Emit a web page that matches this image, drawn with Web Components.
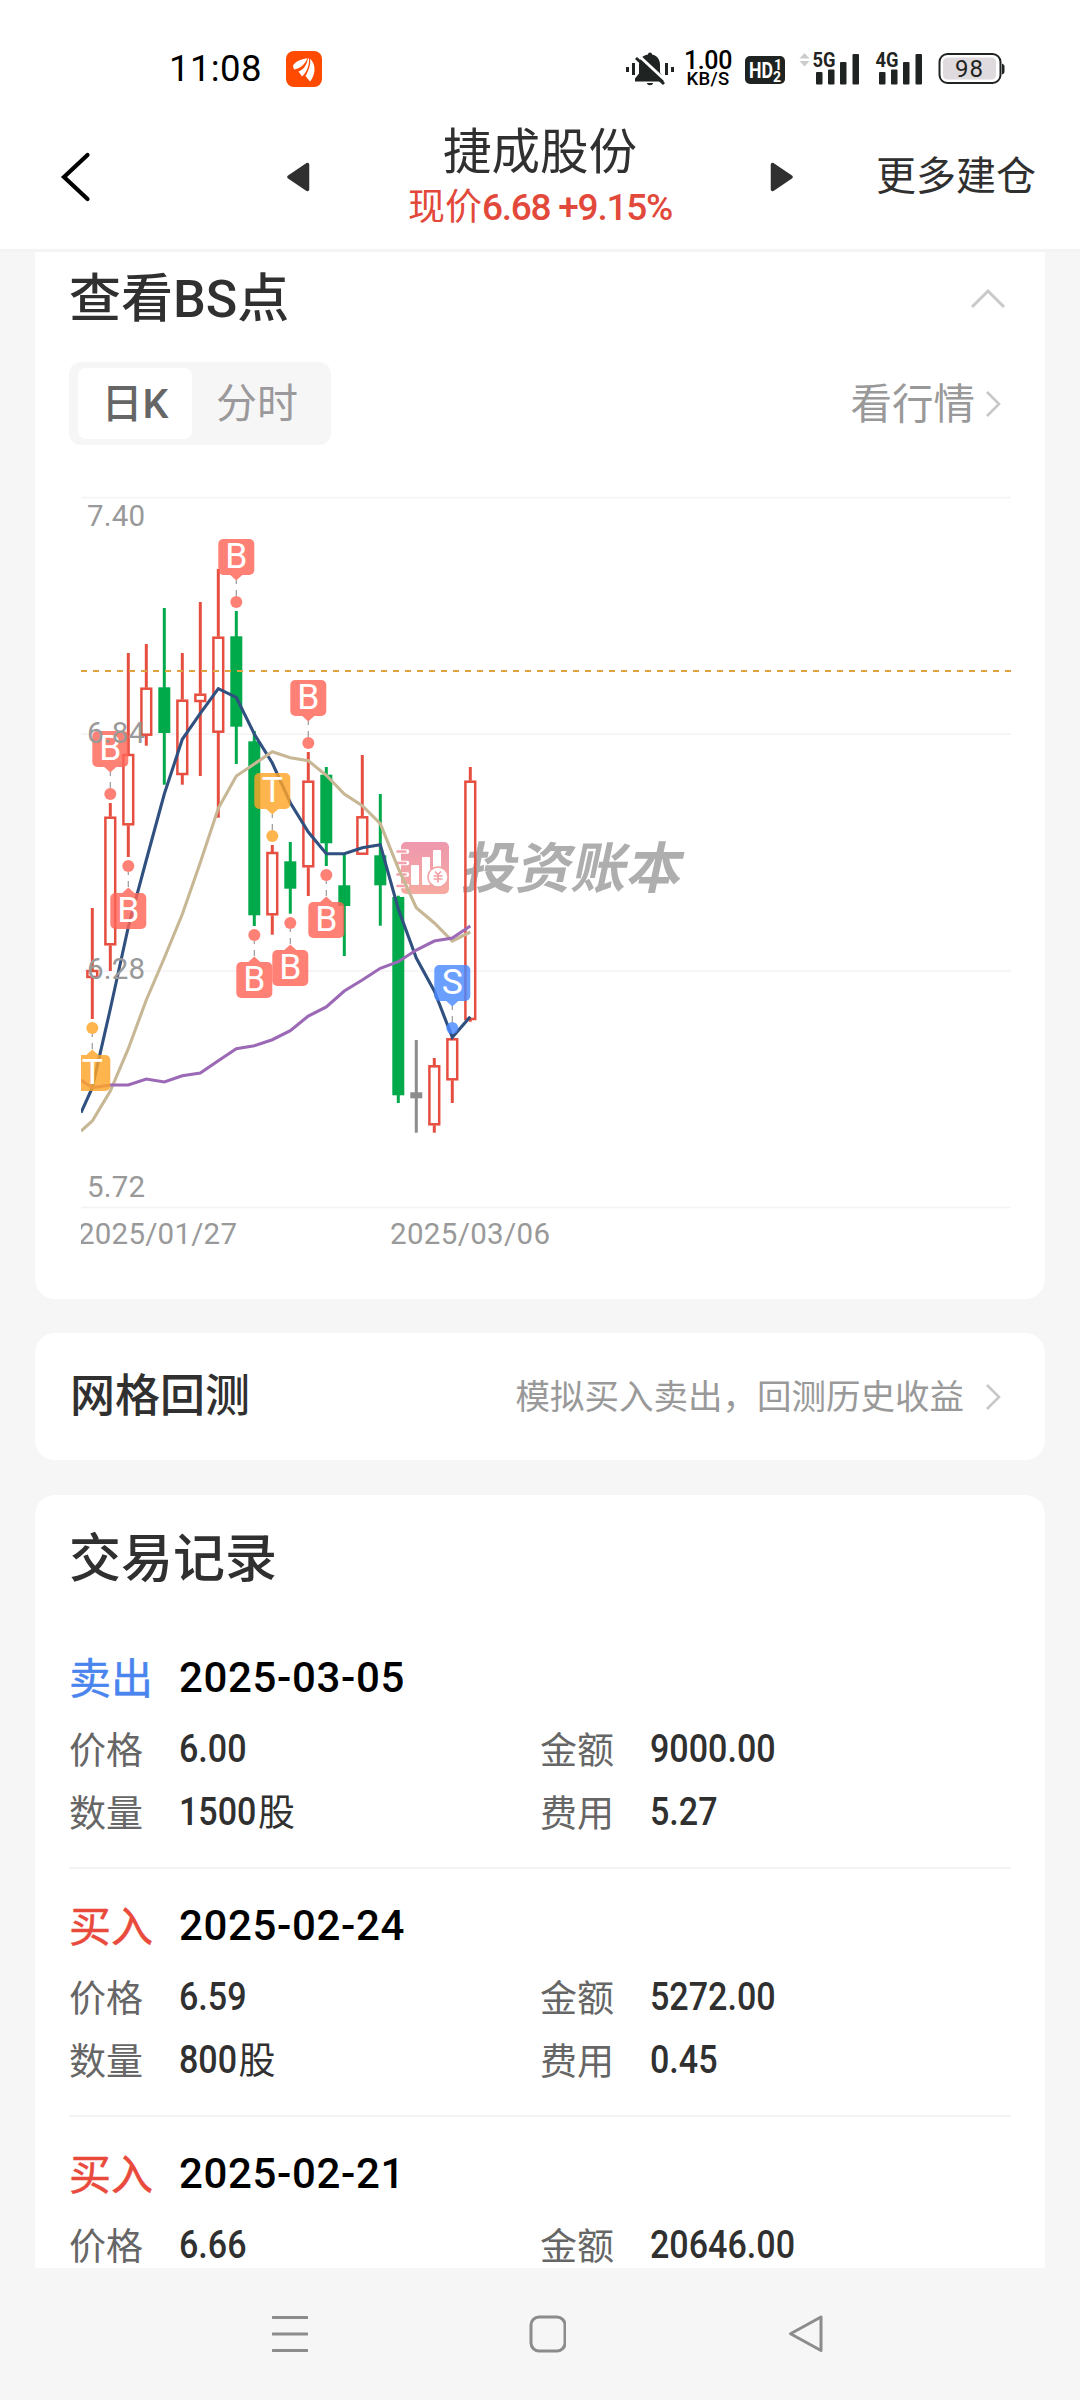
<!DOCTYPE html>
<html lang="zh-CN">
<head>
<meta charset="utf-8">
<title>捷成股份</title>
<style>
html,body{margin:0;padding:0}
body{width:1080px;height:2400px;overflow:hidden;background:#f6f6f7;font-family:Roboto,"Noto Sans CJK SC",sans-serif;color:#303030}
</style>
</head>
<body>
<stock-app></stock-app>
<script>
const define = (name, html, setup) => customElements.define(name, class extends HTMLElement {
  connectedCallback() {
    if (this.shadowRoot) return;
    const root = this.attachShadow({ mode: 'open' });
    root.innerHTML = typeof html === 'function' ? html(this) : html;
    if (setup) setup(this, root);
  }
});

/* Text spread over a given width by letter spacing. */
define('fit-text', `<style>:host{display:inline-block;white-space:pre}span{display:inline-block}</style><span><slot></slot></span>`,
  (host, root) => {
    const span = root.querySelector('span');
    const want = +host.getAttribute('w');
    const n = [...host.textContent].length;
    span.style.letterSpacing = ((want - span.getBoundingClientRect().width) / n) + 'px';
    host.style.width = want + 'px';
  });

define('status-bar', `<style>
:host{display:flex;padding:34px 74px 0 169px;align-items:center;justify-content:space-between;height:70px;color:#000}
.l,.r{display:flex;align-items:center}
.l{gap:24px;font-size:36.500px;line-height:36px}
.l svg,.r svg{display:block;overflow:visible}
.speed{display:flex;flex-direction:column;align-items:center;font-weight:500;width:48px;margin:0 12px 0 9px}
.speed .a{font-size:25px;line-height:20px;font-weight:500}
.speed .b{font-size:18.500px;line-height:17px}
</style>
<div class="l"><fit-text w="93">11:08</fit-text>
<svg width="36" height="36" viewBox="0 0 36 36"><rect width="36" height="36" rx="8" fill="#ff4a00"/><path fill="#fff" d="M20 7.500C13 8.500 8 12 7 15L8 18.500C14 18 19 13 21.500 7.500ZM22 7.500C21 14 17 19 12.500 20.500L16 25.500C21 21 23.500 14 23 7.500ZM24 7.500C25 13 23 19 19.500 25L24 30.500C29 25 31 14 24 7.500Z"/></svg></div>
<div class="r">
<svg width="49" height="36" viewBox="627 51 49 36" fill="#1f2321"><rect x="627" y="67" width="3" height="5"/><rect x="633" y="63" width="3" height="12"/><rect x="666" y="63" width="3" height="12"/><rect x="672" y="67" width="3" height="5"/><path d="M651 52.500c1.500 0 2 1 2 2 5 1 8 5 8 10v8l4 6v3h-29v-3l4-5v-8c0-6 3-10 9-11 0-1 .5-2 2-2zM648 83h6c0 3-6 3-6 0z"/><path d="M638.500 54.500l28 26" stroke="#fff" stroke-width="3"/><path d="M637 58l28 26" stroke="#1f2321" stroke-width="3"/></svg>
<div class="speed"><span class="a"><fit-text w="48">1.00</fit-text></span><span class="b"><fit-text w="43">KB/S</fit-text></span></div>
<svg width="262" height="36" viewBox="744 51 262 36" fill="#1f2321" font-family="Roboto,sans-serif">
<rect x="745" y="56" width="40" height="28" rx="5"/>
<text x="749" y="78" font-size="22" font-weight="700" fill="#fff" textLength="24" lengthAdjust="spacingAndGlyphs">HD</text>
<text x="774" y="69.500" font-size="14" font-weight="700" fill="#fff">1</text><text x="773" y="81.500" font-size="14" font-weight="700" fill="#fff">2</text>
<path d="M804.500 53l5 5.500h-10zM804.500 66.500l5-5.500h-10z" fill="#ccc"/>
<text x="812.500" y="67" font-size="21" font-weight="700" textLength="23" lengthAdjust="spacingAndGlyphs">5G</text>
<text x="875.500" y="67" font-size="21" font-weight="700" textLength="23" lengthAdjust="spacingAndGlyphs">4G</text>
<g id="b"><rect x="816" y="72" width="6.500" height="12.500" rx="1"/><rect x="828" y="69.500" width="6.500" height="15" rx="1"/><rect x="840" y="62" width="6.500" height="22.500" rx="1"/><rect x="852.500" y="54" width="6.500" height="30.500" rx="1"/></g>
<use href="#b" x="63"/>
<rect x="939.500" y="54" width="61" height="29" rx="8" fill="none" stroke="#1f2321" stroke-width="2"/>
<rect x="943" y="57.500" width="53" height="22" rx="4.500" fill="#dedade"/><path d="M1002 63.500q2.500 1 2.500 2.500v6q0 1.500-2.500 2.500z"/>
<text x="955" y="77" font-size="24" textLength="28">98</text>
</svg></div>`);

define('nav-header', `<style>
:host{display:grid;grid-template-columns:230px 130px 360px 130px 230px;height:145px;align-items:center;border-bottom:3px solid #f5f3f5;background:#fff}
.t{text-align:center;align-self:start}
.n{font-size:48.500px;line-height:56px;margin-top:21px;color:#303030}
.p{font-size:37px;line-height:46px;margin-top:4px;color:#e2493b;white-space:pre;display:flex;justify-content:center}
.p fit-text{font-weight:500;font-size:37px}
.more{font-size:40px;white-space:nowrap;padding-left:26px;line-height:52px;padding-top:1px}
svg{display:block}
</style>
<svg width="60" height="56" viewBox="40 149 60 56" style="margin-left:40px"><path d="M87.500 155L64 177L87.500 199" fill="none" stroke="#000" stroke-width="4.200" stroke-linecap="round"/></svg>
<svg width="24" height="30" viewBox="0 0 24 30" style="margin-left:57px"><path d="M20.500 2.500v25L2 15z" fill="#303030" stroke="#303030" stroke-width="3.500" stroke-linejoin="round"/></svg>
<div class="t"><div class="n">捷成股份</div><div class="p">现价<fit-text w="190">6.68 +9.15%</fit-text></div></div>
<svg width="24" height="30" viewBox="0 0 24 30" style="margin-left:49px"><path d="M3.500 2.500v25L22 15z" fill="#303030" stroke="#303030" stroke-width="3.500" stroke-linejoin="round"/></svg>
<div class="more">更多建仓</div>`);

define('panel-card', `<style>:host{display:block;background:#fff;border-radius:20px;padding:0 34px;box-sizing:border-box;overflow:hidden}</style><slot></slot>`);

define('chevron-icon', h => {
  const up = h.hasAttribute('up');
  return `<style>:host{display:block}svg{display:block}</style>` + (up
    ? `<svg width="36" height="22" viewBox="0 0 36 22"><path d="M2 20L18 4L34 20" fill="none" stroke="#c8c8ca" stroke-width="3"/></svg>`
    : `<svg width="16" height="28" viewBox="0 0 16 28"><path d="M2 2L14 14L2 26" fill="none" stroke="#c8c8ca" stroke-width="2.600"/></svg>`);
});

define('segmented-tabs', `<style>
:host{display:flex;box-sizing:border-box;width:262px;height:83px;padding:6px 9px;background:#f6f6f7;border-radius:12px;font-size:41px}
span{display:flex;align-items:center;justify-content:center;box-sizing:border-box;padding-bottom:8px}
.on{width:114px;background:#fff;border-radius:8px;color:#666;font-weight:500}
.off{flex:1;color:#9b999b}
</style><span class="on">日K</span><span class="off">分时</span>`);

const X0 = 92.3, STEP = 18;
const candles = [
 ['r',908,970,978,1019],['r',803,816.7,945.3,971],['r',653,754,825.3,857],['r',644,687.7,735.7,745.7],
 ['g',608,687.3,733,784.7],['r',653,699.7,775,784.7],['r',602,693.7,702,776],['r',569,636.7,732.7,817.7],
 ['g',611,636.3,726.7,764],['g',731,741.3,915.3,926],['r',845,852,915.3,934.7],['g',842,861.3,888.7,913.7],
 ['r',752,780.7,867.3,896],['g',767,774.7,843.3,866],['g',854,885.3,906,956],['r',755,816.3,854.7,854.7],
 ['g',794,855.3,885.3,925.7],['g',895.7,897,1095.3,1103],['n',1040,1092.3,1098.3,1132.7],
 ['r',1058,1065.3,1125.3,1132.7],['r',1038,1038.3,1080.3,1103],['r',767,780.7,1020,1021.7]];
const averages = [
 ['#30507f',1112.7,[1087.7,1009,927,860,794,739.3,713.3,688.7,697.3,734,763,802.7,832,853.7,853.7,847.7,844.7,909,958,991,1037.3,1016.7]],
 ['#c7b795',1131,[1121,1091,1048.7,1000,958,914.3,862.5,808.3,776,764,751.7,757.7,760.7,775.3,794,805.7,823.7,868.3,907.7,923,941,932]],
 ['#9b69b5',1080,[1087.7,1085,1085,1079,1082,1075.7,1073,1060.7,1048.7,1045.7,1039.7,1030.7,1016,1007,991,980,968.3,961.7,950,941,938,926]]];
const markers = [['B',1,794,1],['B',8,602,1],['T',10,836,1],['B',12,743,1],['S',20,1028,1],
 ['T',0,1028,0],['B',2,866,0],['B',9,935,0],['B',11,923,0],['B',13,875,0]];
const tint = { B:'#ff6659', T:'#ffa528', S:'#4a8aff' };

function candleSvg([c,h,t,b,l], i) {
  const x = X0 + STEP * i, col = { r:'#e64e40', g:'#00aa4b', n:'#8c8c8e' }[c];
  const wick = (a, z) => z > a ? `<path d="M${x} ${a}V${z}" stroke="${col}" stroke-width="3"/>` : '';
  if (c !== 'r') return wick(h, l) + `<rect x="${x-6}" y="${t}" width="12" height="${b-t}" fill="${col}"/>`;
  return wick(h, t) + wick(b, l) + `<rect x="${x-4.9}" y="${t+1}" width="9.800" height="${b-t-2}" fill="none" stroke="${col}" stroke-width="2.500"/>`;
}
function markerSvg([k, i, y, above]) {
  const x = X0 + STEP * i, top = above ? y - 63 : y + 27;
  const tip = above ? `M${x-6} ${top+36}L${x} ${top+41.5}L${x+6} ${top+36}z` : `M${x-6} ${top}L${x} ${top-5.5}L${x+6} ${top}z`;
  const d = above ? `M${x} ${y-22}v4M${x} ${y-12}v6` : `M${x} ${y+6}v3M${x} ${y+15}v6`;
  return `<path d="${d}" stroke="#999" stroke-width="1.200"/><g fill="${tint[k]}" opacity=".82"><rect x="${x-18}" y="${top}" width="36" height="36" rx="5"/><path d="${tip}"/><circle cx="${x}" cy="${y}" r="6"/></g>
  <text x="${x}" y="${top+29}" font-size="35.500" fill="#fff" text-anchor="middle">${k}</text>`;
}
define('k-chart', () => {
  const grid = [497.5,734.2,970.9,1207.5].map(y => `<path d="M81 ${y}H1011" stroke="#f4f2f4" stroke-width="1.500"/>`).join('');
  const lines = averages.map(([c,s,p]) => `<polyline fill="none" stroke="${c}" stroke-width="3.100" points="81,${s} ${p.map((y,i)=>(X0+STEP*i)+','+y).join(' ')}"/>`).join('');
  const label = (t,x,y,w) => `<text x="${x}" y="${y}" textLength="${w}">${t}</text>`;
  return `<style>:host{display:block}svg{display:block}</style>
<svg width="930" height="780" viewBox="81 480 930 780" font-family="Roboto,'Noto Sans CJK SC',sans-serif">
<defs><linearGradient id="wm" x1="0" y1="0" x2="0" y2="1"><stop offset="0" stop-color="#ee98ae"/><stop offset="1" stop-color="#f6aaa0"/></linearGradient></defs>
${grid}
<rect x="401" y="842" width="48" height="52" rx="5" fill="url(#wm)"/>
<g stroke="#fff" stroke-width="4.500" stroke-linecap="round"><path d="M399 851.500h8M399 863h8M399 874.500h8M399 886h8"/></g>
<g stroke="#f2a2ac" stroke-width="2.600" stroke-linecap="round"><path d="M397.500 851.500h8M397.500 863h8M397.500 874.500h8M397.500 886h8"/></g>
<g fill="#fff"><rect x="411" y="865" width="8" height="20" rx="1"/><rect x="422" y="857" width="8" height="28" rx="1"/><rect x="433" y="850" width="8" height="22" rx="1"/><circle cx="438" cy="877" r="10" stroke="#f4a3a5" stroke-width="1.500"/></g>
<path d="M435 871.500l3 3 3-3M433.500 876h9M433.500 879h9M438 874v8.500" fill="none" stroke="#f2a0a5" stroke-width="1.700"/>
<text transform="translate(460 888) skewX(-12)" font-size="55" font-weight="700" fill="#aeaeae" textLength="220">投资账本</text>
${candles.map(candleSvg).join('')}
<path d="M81 671H1011" stroke="#e0a23e" stroke-width="2" stroke-dasharray="6 6"/>
${lines}
${markers.map(markerSvg).join('')}
<g font-size="29.500" fill="#999">${label('7.40',87,526,58)}${label('6.84',87,742.5,58)}${label('6.28',87,979,58)}${label('5.72',87,1196.7,58)}${label('2025/01/27',78,1243.7,159)}${label('2025/03/06',390,1243.7,160)}</g>
</svg>`;
});

define('trade-record', h => {
  const a = n => h.getAttribute(n), sell = a('side') === '卖出';
  const cell = (k, v, unit = '') => `<div class="c"><span class="k">${k}</span><span class="v">${v}</span>${unit && `<span class="u" style="margin-left:${1 - v.length * 2.4}px">${unit}</span>`}</div>`;
  return `<style>
:host{display:block;height:248px;box-sizing:border-box;border-bottom:2px solid #f3f3f3;padding-top:29px}
.h{display:flex;align-items:center;height:54px;font-size:42px;font-weight:500;color:#000}
.s{width:110px;font-weight:400;padding-bottom:4px;color:${sell ? '#4a84ee' : '#e94a3c'};-webkit-text-stroke:.5px}
.h fit-text{padding-top:1px}
.g{display:grid;grid-template-columns:471px 1fr;grid-auto-rows:63px;margin-top:13px}
.c{display:flex;align-items:center;font-size:37px}
.k{width:110px;color:#666;padding-bottom:2px}
.v{color:#303030;font-weight:500;font-size:38.500px;transform:scaleX(.885);transform-origin:0 50%}
.u{color:#303030;padding-bottom:3px}
</style><div class="h"><span class="s">${a('side')}</span><fit-text w="226">${a('date')}</fit-text></div>
<div class="g">${cell('价格', a('price'))}${cell('金额', a('amount'))}${cell('数量', a('qty'), '股')}${cell('费用', a('fee'))}</div>`;
});

define('system-nav', `<style>:host{display:block;height:132px;background:#f6f6f7}div{display:flex;padding:46px 256px 0 272px;justify-content:space-between}svg{display:block}</style>
<div><svg width="36" height="40" viewBox="0 0 36 40"><path d="M1 3.500h34M1 20h34M1 36.500h34" stroke="#8c8c8e" stroke-width="3" stroke-linecap="round"/></svg>
<svg width="38" height="40" viewBox="0 0 38 40"><rect x="3" y="3" width="34" height="34" rx="8" fill="none" stroke="#8c8c8e" stroke-width="3"/></svg>
<svg width="38" height="40" viewBox="0 0 38 40"><path d="M35 3v33.500L4.500 19.800z" fill="none" stroke="#8c8c8e" stroke-width="3" stroke-linejoin="round"/></svg></div>`);

define('stock-app', `<style>
:host{display:flex;flex-direction:column;width:1080px;height:2400px;background:#f6f6f7}
.top{background:#fff}
main{flex:1;min-height:0;overflow:hidden;padding:0 35px;display:flex;flex-direction:column}
.bs{height:1047px;border-radius:0 0 20px 20px;flex:none}
.row{display:flex;align-items:center;justify-content:space-between}
h2{margin:0;font-size:52px;font-weight:500;line-height:60px;color:#303030}
.head{height:92px}
.head h2{padding-top:4px}
.market{display:flex;align-items:center;gap:10px;font-size:41.500px;color:#999;padding-right:10px}
.market span,.d span{padding-bottom:6px}
.grid{height:127px;margin:34px 0 35px;flex:none}
.grid .row{height:127px}
.grid b{font-weight:500;font-size:45px;margin-left:1px;padding-bottom:8px}
.grid .d{display:flex;align-items:center;gap:21px;font-size:34.500px;color:#999;padding-right:10px}
.rec{flex:none;height:1000px}
.rec h2{padding:35px 0 31px}
k-chart{margin:35px 0 0 12px}
</style>
<div class="top"><status-bar></status-bar><nav-header></nav-header></div>
<main>
<panel-card class="bs">
<div class="row head"><h2>查看BS点</h2><chevron-icon up style="margin-right:5px"></chevron-icon></div>
<div class="row" style="margin-top:18px"><segmented-tabs></segmented-tabs><div class="market"><span>看行情</span><chevron-icon></chevron-icon></div></div>
<k-chart></k-chart>
</panel-card>
<panel-card class="grid"><div class="row"><b>网格回测</b><div class="d"><span>模拟买入卖出，回测历史收益</span><chevron-icon></chevron-icon></div></div></panel-card>
<panel-card class="rec"><h2>交易记录</h2>
<trade-record side="卖出" date="2025-03-05" price="6.00" amount="9000.00" qty="1500" fee="5.27"></trade-record>
<trade-record side="买入" date="2025-02-24" price="6.59" amount="5272.00" qty="800" fee="0.45"></trade-record>
<trade-record side="买入" date="2025-02-21" price="6.66" amount="20646.00" qty="3100" fee="1.76"></trade-record>
</panel-card>
</main>
<system-nav></system-nav>`);
</script>
</body>
</html>
